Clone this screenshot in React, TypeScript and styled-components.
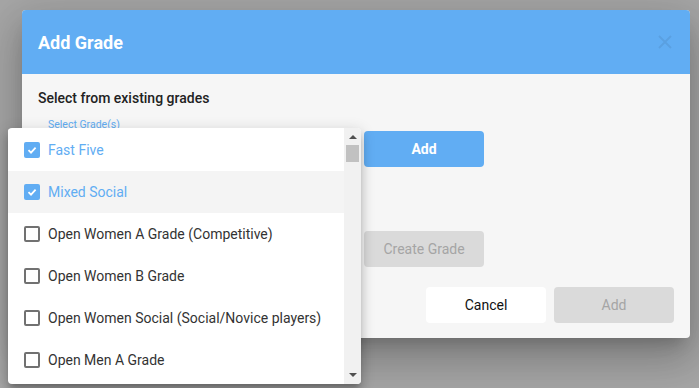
import styled, { createGlobalStyle } from 'styled-components';

const GlobalStyle = createGlobalStyle`
  html, body {
    margin: 0;
    padding: 0;
    background: #a6a6a6;
    font-family: Roboto, 'Liberation Sans', sans-serif;
  }
`;

const BLUE = '#61adf3';

const StyledOverlay = styled.div`
  position: relative;
  width: 699px;
  height: 388px;
  overflow: hidden;
  padding: 10px 0 0 22px;
  box-sizing: border-box;
  background: #a6a6a6;
`;

const StyledDialog = styled.div`
  width: 668px;
  display: flex;
  flex-direction: column;
  background: #f6f6f6;
  border-radius: 4px;
  overflow: hidden;
  box-shadow: 0 11px 15px -7px rgba(0, 0, 0, 0.2), 0 24px 38px 3px rgba(0, 0, 0, 0.14),
    0 9px 46px 8px rgba(0, 0, 0, 0.12);
`;

const StyledHeader = styled.div`
  height: 64px;
  display: flex;
  align-items: center;
  justify-content: space-between;
  padding: 0 18px 0 16px;
  background: ${BLUE};
`;

const StyledTitle = styled.div`
  color: #fff;
  font-size: 18px;
  font-weight: 700;
`;

const StyledClose = styled.svg`
  width: 14px;
  height: 14px;
`;

const StyledBody = styled.div`
  display: flex;
  flex-direction: column;
  padding: 14px 16px 15px;
`;

const StyledSectionTitle = styled.div`
  font-size: 14px;
  line-height: 20px;
  font-weight: 500;
  color: #222;
`;

const StyledRow = styled.div<{ top: number }>`
  display: flex;
  gap: 10px;
  margin-top: ${(p) => p.top}px;
`;

const StyledField = styled.div`
  width: 316px;
  padding: 3px 0 0 10px;
  box-sizing: border-box;
`;

const StyledLabel = styled.div`
  font-size: 10.5px;
  line-height: 12px;
  color: ${BLUE};
`;

const StyledButton = styled.button<{ variant: 'primary' | 'white' | 'disabled'; offset?: number }>`
  width: 120px;
  height: 36px;
  margin-top: ${(p) => p.offset || 0}px;
  border: none;
  border-radius: 4px;
  font-family: Roboto, 'Liberation Sans', sans-serif;
  font-size: 14px;
  font-weight: ${(p) => (p.variant === 'primary' ? 700 : 400)};
  color: ${(p) => (p.variant === 'primary' ? '#fff' : p.variant === 'white' ? '#111' : '#a5a5a5')};
  background: ${(p) => (p.variant === 'primary' ? BLUE : p.variant === 'white' ? '#fff' : '#dadada')};
`;

const StyledFooter = styled.div`
  display: flex;
  justify-content: flex-end;
  gap: 8px;
  margin-top: 20px;
`;

const StyledMenu = styled.div`
  position: absolute;
  left: 8px;
  top: 128px;
  width: 353px;
  height: 256px;
  display: flex;
  background: #fff;
  border-radius: 4px;
  overflow: hidden;
  box-shadow: 0 5px 5px -3px rgba(0, 0, 0, 0.2), 0 8px 10px 1px rgba(0, 0, 0, 0.14),
    0 3px 14px 2px rgba(0, 0, 0, 0.12);
`;

const StyledList = styled.div`
  flex: 1;
  padding-top: 1px;
`;

const StyledItem = styled.div<{ checked: boolean; hover?: boolean }>`
  height: 42px;
  display: flex;
  align-items: center;
  gap: 8px;
  padding-left: 16px;
  font-size: 14px;
  color: ${(p) => (p.checked ? BLUE : '#333')};
  background: ${(p) => (p.hover ? '#f4f4f4' : '#fff')};
`;

const StyledCheck = styled.div<{ checked: boolean }>`
  width: 16px;
  height: 16px;
  box-sizing: border-box;
  border-radius: 2px;
  display: flex;
  align-items: center;
  justify-content: center;
  border: ${(p) => (p.checked ? 'none' : '2px solid #717171')};
  background: ${(p) => (p.checked ? BLUE : '#fff')};
`;

const StyledScrollbar = styled.div`
  width: 17px;
  display: flex;
  flex-direction: column;
  align-items: center;
  background: #f1f1f1;
`;

const StyledArrow = styled.div<{ down?: boolean }>`
  width: 0;
  height: 0;
  margin: ${(p) => (p.down ? 'auto 0 7px' : '7px 0 0')};
  border-left: 4px solid transparent;
  border-right: 4px solid transparent;
  ${(p) => (p.down ? 'border-top: 4px solid #505050;' : 'border-bottom: 4px solid #505050;')}
`;

const StyledThumb = styled.div`
  width: 13px;
  height: 17px;
  margin-top: 6px;
  background: #c1c1c1;
`;

const grades = [
  { name: 'Fast Five', checked: true },
  { name: 'Mixed Social', checked: true, hover: true },
  { name: 'Open Women A Grade (Competitive)', checked: false },
  { name: 'Open Women B Grade', checked: false },
  { name: 'Open Women Social (Social/Novice players)', checked: false },
  { name: 'Open Men A Grade', checked: false },
];

const App = () => {
  const itemList = grades.map((g) => (
    <StyledItem key={g.name} checked={g.checked} hover={g.hover}>
      <StyledCheck checked={g.checked}>
        {g.checked && (
          <svg width="12" height="12" viewBox="0 0 12 12">
            <path d="M2.5 6.2 L5 8.6 L9.6 3.6" stroke="#fff" strokeWidth="1.8" fill="none" />
          </svg>
        )}
      </StyledCheck>
      {g.name}
    </StyledItem>
  ));

  return (
    <>
      <GlobalStyle />
      <StyledOverlay>
        <StyledDialog>
          <StyledHeader>
            <StyledTitle>Add Grade</StyledTitle>
            <StyledClose viewBox="0 0 14 14">
              <path d="M1 1 L13 13 M13 1 L1 13" stroke="rgba(0,0,0,0.07)" strokeWidth="2" />
            </StyledClose>
          </StyledHeader>
          <StyledBody>
            <StyledSectionTitle>Select from existing grades</StyledSectionTitle>
            <StyledRow top={8}>
              <StyledField>
                <StyledLabel>Select Grade(s)</StyledLabel>
              </StyledField>
              <StyledButton variant="primary" offset={15}>
                Add
              </StyledButton>
            </StyledRow>
            <StyledRow top={64}>
              <StyledField />
              <StyledButton variant="disabled">Create Grade</StyledButton>
            </StyledRow>
            <StyledFooter>
              <StyledButton variant="white">Cancel</StyledButton>
              <StyledButton variant="disabled">Add</StyledButton>
            </StyledFooter>
          </StyledBody>
        </StyledDialog>
        <StyledMenu>
          <StyledList>{itemList}</StyledList>
          <StyledScrollbar>
            <StyledArrow />
            <StyledThumb />
            <StyledArrow down />
          </StyledScrollbar>
        </StyledMenu>
      </StyledOverlay>
    </>
  );
};

export default App;
